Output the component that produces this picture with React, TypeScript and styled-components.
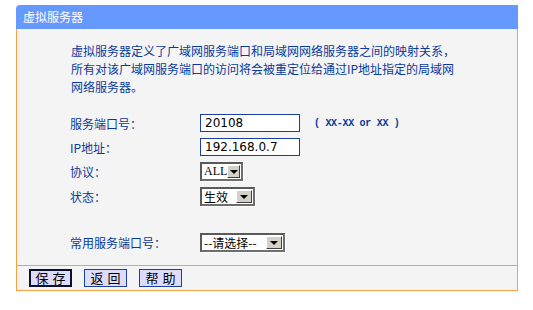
import React from 'react';
import styled, { createGlobalStyle } from 'styled-components';

const Global = createGlobalStyle`
  body {
    margin: 0;
    background: #ffffff;
    font-family: "Noto Sans CJK SC", "Liberation Sans", sans-serif;
    font-size: 12px;
  }
`;

const Panel = styled.div`
  margin: 5px 0 0 16px;
  width: 502px;
`;

const Header = styled.div`
  height: 24px;
  line-height: 23px;
  padding-left: 7px;
  background: #6699ff;
  color: #ffffff;
  font-size: 12px;
  border-top-left-radius: 4px;
`;

const Body = styled.div`
  height: 236px;
  box-sizing: border-box;
  background: #f4f4f4;
  border-left: 1px solid #f7a143;
  border-right: 1px solid #f7a143;
  padding: 13px 0 0 54px;
`;

const Intro = styled.p`
  margin: 0;
  line-height: 18px;
  color: #0a3a9c;
  white-space: nowrap;
`;

const Form = styled.div`
  display: grid;
  grid-template-columns: 130px auto;
  align-items: center;
  row-gap: 6px;
  margin-top: 18px;
  margin-left: -1px;
`;

const Label = styled.div<{ $gap?: number }>`
  color: #0a3a9c;
  margin-top: ${(p) => p.$gap ?? 0}px;
`;

const Field = styled.div<{ $gap?: number }>`
  display: flex;
  align-items: center;
  gap: 14px;
  margin-top: ${(p) => p.$gap ?? 0}px;
`;

const TextInput = styled.div`
  width: 100px;
  height: 18px;
  box-sizing: border-box;
  border: 1px solid #1b3e9f;
  background: #ffffff;
  padding-left: 4px;
  line-height: 16px;
  font-family: "DejaVu Sans", "Liberation Sans", sans-serif;
  font-size: 12px;
  color: #000000;
`;

const Hint = styled.span`
  font-family: "Liberation Mono", monospace;
  font-size: 10px;
  font-weight: bold;
  color: #0a3a9c;
  letter-spacing: -0.3px;
`;

const SelectBox = styled.div<{ $w: number }>`
  width: ${(p) => p.$w}px;
  height: 19px;
  box-sizing: border-box;
  display: flex;
  align-items: center;
  background: #ffffff;
  border: 2px solid #5a5a5a;
  border-right-color: #6e6e6e;
  border-bottom-color: #6e6e6e;
  box-shadow: 1px 1px 0 #ffffff;
  padding: 0 1px 0 2px;
  font-size: 12px;
  color: #000000;
`;

const SelectText = styled.span<{ $serif?: boolean }>`
  flex: 1;
  font-family: ${(p) =>
    p.$serif ? '"Liberation Serif", serif' : '"Noto Sans CJK SC", sans-serif'};
  line-height: 15px;
`;

const Arrow = styled.span`
  width: 16px;
  height: 13px;
  box-sizing: border-box;
  display: flex;
  align-items: center;
  justify-content: center;
  background: #d4d0c8;
  border: 1px solid;
  border-color: #ffffff #404040 #404040 #ffffff;
  &::after {
    content: '';
    border-left: 4px solid transparent;
    border-right: 4px solid transparent;
    border-top: 4px solid #000000;
  }
`;

const Footer = styled.div`
  height: 26px;
  box-sizing: border-box;
  background: #f4f4f4;
  border: 1px solid #f7a143;
  display: flex;
  align-items: flex-start;
  gap: 12px;
  padding: 3px 0 0 12px;
`;

const Button = styled.button<{ $focus?: boolean }>`
  width: 43px;
  height: 18px;
  box-sizing: border-box;
  padding: 0;
  background: #dcdcff;
  border: ${(p) => (p.$focus ? '2px solid #0a1030' : '1px solid #1b3e9f')};
  font-family: "Noto Sans CJK SC", sans-serif;
  font-size: 13px;
  line-height: 14px;
  letter-spacing: 4px;
  text-indent: 4px;
  color: #000000;
`;

function Select({ w, value, serif }: { w: number; value: string; serif?: boolean }) {
  return (
    <SelectBox $w={w}>
      <SelectText $serif={serif}>{value}</SelectText>
      <Arrow />
    </SelectBox>
  );
}

export default function App() {
  return (
    <>
      <Global />
      <Panel>
        <Header>虚拟服务器</Header>
        <Body>
          <Intro>
            虚拟服务器定义了广域网服务端口和局域网网络服务器之间的映射关系，
            <br />
            所有对该广域网服务端口的访问将会被重定位给通过IP地址指定的局域网
            <br />
            网络服务器。
          </Intro>
          <Form>
            <Label>服务端口号：</Label>
            <Field>
              <TextInput>20108</TextInput>
              <Hint>( XX-XX or XX )</Hint>
            </Field>
            <Label>IP地址：</Label>
            <Field>
              <TextInput>192.168.0.7</TextInput>
            </Field>
            <Label>协议：</Label>
            <Field>
              <Select w={43} value="ALL" serif />
            </Field>
            <Label>状态：</Label>
            <Field>
              <Select w={55} value="生效" />
            </Field>
            <Label $gap={21}>常用服务端口号：</Label>
            <Field $gap={21}>
              <Select w={85} value="--请选择--" />
            </Field>
          </Form>
        </Body>
        <Footer>
          <Button $focus>保存</Button>
          <Button>返回</Button>
          <Button>帮助</Button>
        </Footer>
      </Panel>
    </>
  );
}
